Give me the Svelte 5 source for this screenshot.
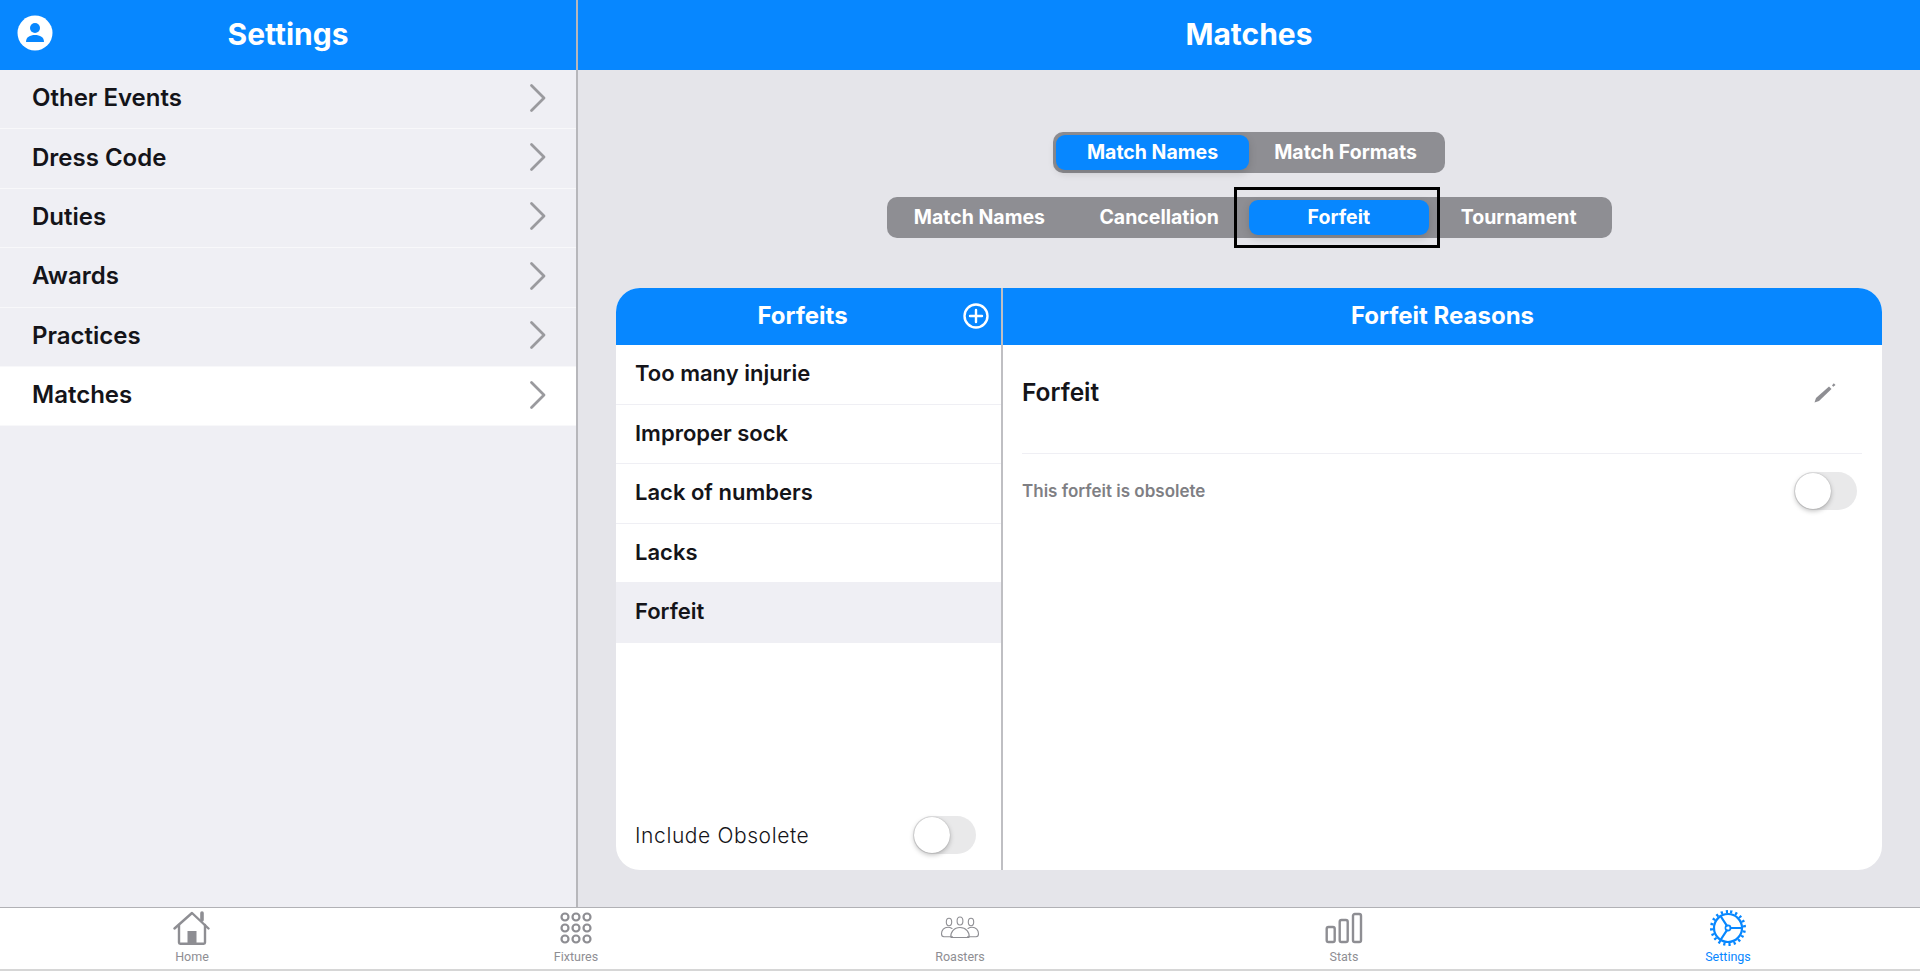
<script>
  const sections = ["Other Events", "Dress Code", "Duties", "Awards", "Practices", "Matches"];
  const forfeits = ["Too many injurie", "Improper sock", "Lack of numbers", "Lacks", "Forfeit"];
  const subTabs = ["Match Names", "Cancellation", "Forfeit", "Tournament"];

  let section = $state("Matches");
  let forfeit = $state("Forfeit");
  let subTab = $state("Forfeit");
  let topTab = $state("Match Names");
  let includeObsolete = $state(false);
  let obsolete = $state(false);
</script>

<div class="app">
  <div class="panes">
    <aside class="sidebar">
      <header class="bar">
        <svg class="avatar" viewBox="0 0 36 36" aria-hidden="true">
          <circle cx="18" cy="18" r="17.5" fill="#fff" />
          <circle cx="18" cy="13" r="5" fill="#0787ff" />
          <path d="M9 27c0-5 4-7 9-7s9 2 9 7z" fill="#0787ff" />
        </svg>
        <h1>Settings</h1>
      </header>
      <nav>
        {#each sections as name}
          <button class="nav-row" class:active={section === name} onclick={() => (section = name)}>
            <span>{name}</span>
            <svg viewBox="0 0 18 30" aria-hidden="true"><path d="M2.500 2.500 15 15 2.500 27.500" /></svg>
          </button>
        {/each}
      </nav>
    </aside>

    <main class="content">
      <header class="bar"><h1>Matches</h1></header>
      <div class="body">
        <div class="segments">
          <div class="segment two">
            {#each ["Match Names", "Match Formats"] as name}
              <button class:on={topTab === name} onclick={() => (topTab = name)}>{name}</button>
            {/each}
          </div>
          <div class="segment four">
            {#each subTabs as name}
              <button class:on={subTab === name} class:boxed={name === "Forfeit"} onclick={() => (subTab = name)}>{name}</button>
            {/each}
          </div>
        </div>

        <section class="card">
          <div class="col list">
            <div class="card-head">
              <h2>Forfeits</h2>
              <button class="add" aria-label="Add">
                <svg viewBox="0 0 26 26"><circle cx="13" cy="13" r="11.500" /><path d="M13 7v12M7 13h12" /></svg>
              </button>
            </div>
            <div class="rows">
              {#each forfeits as name}
                <button class="row" class:active={forfeit === name} onclick={() => (forfeit = name)}>{name}</button>
              {/each}
            </div>
            <div class="include">
              <span>Include Obsolete</span>
              <button class="toggle" class:on={includeObsolete} aria-label="Include Obsolete" onclick={() => (includeObsolete = !includeObsolete)}><i></i></button>
            </div>
          </div>
          <div class="col detail">
            <div class="card-head"><h2>Forfeit Reasons</h2></div>
            <div class="detail-body">
              <div class="title-row">
                <h3>{forfeit}</h3>
                <svg class="pencil" viewBox="0 0 22 22" aria-hidden="true">
                  <path d="M0.500 21.500 2 17 15 5.500 17.500 8 5 20z" fill="#8e8e93" />
                  <path d="M18 4.500l1.800-2.200 1.700 1.700-2.200 1.800z" fill="#8e8e93" />
                </svg>
              </div>
              <div class="obsolete-row">
                <span>This forfeit is obsolete</span>
                <button class="toggle" class:on={obsolete} aria-label="This forfeit is obsolete" onclick={() => (obsolete = !obsolete)}><i></i></button>
              </div>
            </div>
          </div>
        </section>
      </div>
    </main>
  </div>

  <footer class="tabs">
    <div class="tab">
      <svg viewBox="0 0 38 36" width="38" height="36" aria-hidden="true">
        <path class="s" d="M1.500 18.500 19 3l16.500 15.500" stroke-width="2.400" />
        <path class="s" d="M29 10V3" stroke-width="3.600" />
        <path class="s" d="M6 15v17.500q0 1.200 1.200 1.200h23.600q1.200 0 1.200-1.200V15" stroke-width="2.400" />
        <rect x="14.500" y="21" width="9" height="12.500" fill="currentColor" />
      </svg>
      <span>Home</span>
    </div>
    <div class="tab">
      <svg viewBox="0 0 36 36" width="36" height="36" aria-hidden="true">
        {#each [7, 18, 29] as cy}
          {#each [7, 18, 29] as cx}
            <circle class="s" {cx} {cy} r="3.500" stroke-width="2.200" />
          {/each}
        {/each}
      </svg>
      <span>Fixtures</span>
    </div>
    <div class="tab">
      <svg viewBox="0 0 40 36" width="40" height="36" aria-hidden="true">
        <g class="s" stroke-width="1.100">
          <ellipse cx="9" cy="12" rx="2.700" ry="3.700" />
          <ellipse cx="20" cy="11" rx="2.900" ry="4" />
          <ellipse cx="31" cy="12" rx="2.700" ry="3.700" />
          <path d="M12 18.500q-2-1.200-4-1.200c-4 0-6.500 3-6.500 6.500q0 3 2.500 3h8.500" />
          <path d="M28 18.500q2-1.200 4-1.200c4 0 6.500 3 6.500 6.500q0 3-2.500 3h-8.500" />
          <path d="M11 27.500c-1-5 3-10 9-10s10 5 9 10z" />
        </g>
      </svg>
      <span>Roasters</span>
    </div>
    <div class="tab">
      <svg viewBox="0 0 38 36" width="38" height="36" aria-hidden="true">
        <g class="s" stroke-width="2.400">
          <rect x="1.700" y="17" width="8" height="15" rx="1.800" />
          <rect x="14.700" y="10" width="8" height="22" rx="1.800" />
          <rect x="28" y="4" width="8" height="28" rx="1.800" />
        </g>
      </svg>
      <span>Stats</span>
    </div>
    <div class="tab current">
      <svg viewBox="0 0 38 36" width="38" height="36" aria-hidden="true">
        <g class="s" stroke-width="2.200">
          <circle cx="19" cy="18" r="14" />
          <circle cx="19" cy="18" r="2.600" stroke-width="1.600" />
          <path d="M21.500 18H33M17.800 15.700 11.500 6M17.800 20.300 11.500 30" />
          <path class="teeth" d="M19 1.500a16.500 16.500 0 1 0 .01 0" />
        </g>
      </svg>
      <span>Settings</span>
    </div>
  </footer>
  <div class="strip"></div>
</div>

<style>
  :global(body) {
    margin: 0;
    font-family: Inter, "Liberation Sans", sans-serif;
    color: #141419;
  }

  button {
    font: inherit;
    color: inherit;
    border: 0;
    background: none;
    padding: 0;
    cursor: pointer;
  }

  h1, h2, h3 {
    margin: 0;
  }

  .app {
    height: 971px;
    display: flex;
    flex-direction: column;
    overflow: hidden;
  }

  .panes {
    flex: 1;
    min-height: 0;
    display: flex;
  }

  .bar {
    position: relative;
    flex: none;
    height: 70px;
    padding-bottom: 3px;
    box-sizing: border-box;
    background: #0787ff;
    color: #fff;
    display: flex;
    align-items: center;
    justify-content: center;
  }

  .bar h1 {
    font-size: 30px;
    font-weight: 700;
  }

  .avatar {
    position: absolute;
    left: 17px;
    top: 15px;
    width: 36px;
    height: 36px;
  }

  .sidebar {
    flex: none;
    width: 576px;
    background: #efeff4;
    border-right: 2px solid #b7b7bb;
    display: flex;
    flex-direction: column;
  }

  .nav-row {
    width: 100%;
    height: 59.400px;
    padding: 0 29px 3px 32px;
    box-sizing: border-box;
    border-bottom: 1px solid #f8f8fa;
    display: flex;
    align-items: center;
    justify-content: space-between;
    font-size: 24px;
    font-weight: 600;
  }

  .nav-row.active {
    background: #fff;
  }

  .nav-row svg {
    width: 18px;
    height: 30px;
    fill: none;
    stroke: #9a9a9e;
    stroke-width: 2.800;
    stroke-linecap: round;
    stroke-linejoin: round;
  }

  .content {
    flex: 1;
    min-width: 0;
    background: #e5e5ea;
    display: flex;
    flex-direction: column;
  }

  .body {
    flex: 1;
    min-height: 0;
    padding: 62px 38px 37px 38px;
    display: flex;
    flex-direction: column;
  }

  .segments {
    display: flex;
    flex-direction: column;
    align-items: center;
    gap: 24px;
    margin-bottom: 50px;
  }

  .segment {
    display: flex;
    height: 41px;
    padding: 3px;
    box-sizing: border-box;
    background: #8e8e93;
    border-radius: 10px;
  }

  .segment.two { width: 392px; }
  .segment.four { width: 725px; }

  .segment button {
    flex: 1 1 0;
    padding-bottom: 2px;
    border-radius: 9px;
    color: #fff;
    font-size: 19.500px;
    font-weight: 700;
  }

  .segment button.on {
    background: #0787ff;
    box-shadow: 0 3px 8px rgba(0, 0, 0, 0.15);
  }

  .segment.four button.on {
    position: relative;
  }

  .boxed::after {
    content: "";
    position: absolute;
    left: -15px;
    right: -11px;
    top: -13px;
    bottom: -13px;
    border: 3px solid #000;
  }

  .card {
    flex: 1;
    min-height: 0;
    display: flex;
    background: #fff;
    border-radius: 24px;
    overflow: hidden;
  }

  .col {
    display: flex;
    flex-direction: column;
    min-width: 0;
  }

  .list {
    flex: none;
    width: 385px;
    box-sizing: content-box;
    border-right: 2px solid #bfbfc3;
  }

  .detail {
    flex: 1;
  }

  .card-head {
    position: relative;
    flex: none;
    height: 57px;
    padding-bottom: 2px;
    box-sizing: border-box;
    background: #0787ff;
    color: #fff;
    display: flex;
    align-items: center;
    justify-content: center;
  }

  .list .card-head {
    padding-right: 12px;
  }

  .card-head h2 {
    font-size: 24px;
    font-weight: 700;
  }

  .add {
    position: absolute;
    right: 12px;
    top: 15px;
    width: 26px;
    height: 26px;
  }

  .add svg {
    display: block;
    fill: none;
    stroke: #fff;
    stroke-width: 2.400;
    stroke-linecap: round;
  }

  .rows {
    flex: 1;
  }

  .row {
    display: block;
    width: 100%;
    height: 59.500px;
    padding: 0 0 2px 19px;
    box-sizing: border-box;
    border-bottom: 1px solid #efeff4;
    text-align: left;
    font-size: 22px;
    font-weight: 600;
  }

  .row.active {
    background: #efeff4;
  }

  .include {
    flex: none;
    height: 70px;
    padding: 0 25px 0 19px;
    display: flex;
    align-items: center;
    justify-content: space-between;
    font-size: 21px;
    font-weight: 300;
    letter-spacing: 0.6px;
  }

  .toggle {
    flex: none;
    width: 63px;
    height: 38px;
    background: #e9e9ea;
    border-radius: 19px;
    position: relative;
  }

  .toggle i {
    position: absolute;
    left: 1px;
    top: 1px;
    width: 36px;
    height: 36px;
    background: #fff;
    border-radius: 50%;
    box-shadow: 0 2px 5px rgba(0, 0, 0, 0.25), 0 0 1px rgba(0, 0, 0, 0.3);
  }

  .toggle.on {
    background: #34c759;
  }

  .toggle.on i {
    left: 26px;
  }

  .detail-body {
    padding: 0 20px 0 19px;
  }

  .title-row {
    height: 109px;
    box-sizing: border-box;
    border-bottom: 1px solid #efeff4;
    display: flex;
    justify-content: space-between;
    padding: 32px 26px 0 0;
  }

  .title-row h3 {
    font-size: 24.500px;
    font-weight: 600;
  }

  .pencil {
    width: 22px;
    height: 22px;
    margin-top: 4px;
  }

  .obsolete-row {
    display: flex;
    align-items: center;
    justify-content: space-between;
    padding: 18px 5px 0 0;
    color: #7f7f84;
    font-size: 17px;
    font-weight: 600;
  }

  .tabs {
    flex: none;
    height: 61px;
    border-top: 1px solid #b1b1b5;
    background: #fff;
    display: grid;
    grid-template-columns: repeat(5, 1fr);
  }

  .tab {
    display: flex;
    flex-direction: column;
    align-items: center;
    padding-top: 2px;
    height: 59px;
    color: #8e8e93;
    font-family: Roboto, "Liberation Sans", sans-serif;
    font-size: 12.500px;
  }

  .tab svg {
    display: block;
    height: 36px;
    width: auto;
  }

  .tab span {
    margin-top: 3px;
  }

  .tab.current {
    color: #0787ff;
  }

  .s {
    fill: none;
    stroke: currentColor;
    stroke-linecap: round;
    stroke-linejoin: round;
  }

  .teeth {
    stroke-width: 3;
    stroke-linecap: butt;
    stroke-dasharray: 2.200 3;
  }

  .strip {
    flex: none;
    height: 2px;
    background: #d6d6d6;
  }
</style>
